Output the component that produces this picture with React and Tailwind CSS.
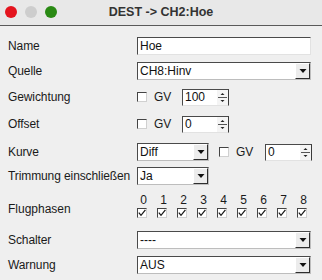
import React from "react";

const font = { fontFamily: '"Liberation Sans", Arial, sans-serif' };

const Check = ({ checked }) => (
  <div className="w-[10px] h-[10px] bg-white border-t border-l border-[#444] border-r-[#d0d0d0] border-b-[#d0d0d0] border-r border-b flex items-center justify-center shrink-0">
    {checked && (
      <svg width="8" height="8" viewBox="0 0 8 8">
        <path d="M0.8 3.6 L3 6.3 L7.4 0.8" fill="none" stroke="#1a1a1a" strokeWidth="1.3" />
      </svg>
    )}
  </div>
);

const Entry = ({ value, className }) => (
  <div
    className={`h-[18px] bg-white border-t border-l border-[#4a4a4a] border-r border-b border-r-[#e2e2e2] border-b-[#e2e2e2] flex items-center pl-[2px] text-[12px] text-[#111] ${className}`}
  >
    {value}
  </div>
);

const Combo = ({ value, className }) => (
  <div
    className={`h-[18px] bg-white border-t border-l border-[#4a4a4a] border-r border-b border-r-[#bdbdbd] border-b-[#bdbdbd] flex items-center text-[12px] text-[#111] ${className}`}
  >
    <span className="flex-1 pl-[2px] leading-none">{value}</span>
    <div className="w-[15px] h-[16px] bg-[#ececec] border-t border-l border-white border-r border-b border-r-[#2e2e2e] border-b-[#2e2e2e] flex items-center justify-center">
      <svg width="8" height="6" viewBox="0 0 8 6">
        <polygon points="0.5,1 7.5,1 4,5" fill="#111" />
      </svg>
    </div>
  </div>
);

const Spin = ({ value, className }) => (
  <div
    className={`h-[17px] bg-white border-t border-l border-[#4a4a4a] border-r border-b border-r-[#3a3a3a] border-b-[#e2e2e2] flex items-center text-[12px] text-[#111] ${className}`}
  >
    <span className="flex-1 pl-[2px] leading-none">{value}</span>
    <div className="w-[11px] h-[15px] bg-[#f4f4f4] flex flex-col items-center justify-center">
      <svg width="11" height="15" viewBox="0 0 11 15">
        <polygon points="3.5,5 7.5,5 5.5,3" fill="#222" />
        <line x1="1" y1="7.5" x2="10" y2="7.5" stroke="#555" strokeWidth="1" />
        <polygon points="3.5,10 7.5,10 5.5,12" fill="#222" />
      </svg>
    </div>
  </div>
);

const Row = ({ label, children, className = "" }) => (
  <div className={`flex items-center h-[18px] ${className}`}>
    <div className="w-[137px] pl-2 text-[12px] tracking-[-0.1px] text-[#1a1a1a] leading-none">{label}</div>
    {children}
  </div>
);

const App = () => {
  const phases = [0, 1, 2, 3, 4, 5, 6, 7, 8];
  return (
    <div className="w-[322px] h-[280px] bg-[#efefef] overflow-hidden" style={font}>
      {/* title bar */}
      <div className="relative h-[26px] bg-[#e8e8e8] border-b border-[#5a5a5a] flex items-center justify-center">
        <div className="absolute left-[5px] top-[6px] flex gap-[8px]">
          <div className="w-[12px] h-[12px] rounded-full bg-[#e4141e]" />
          <div className="w-[12px] h-[12px] rounded-full bg-[#cdcdcd]" />
          <div className="w-[12px] h-[12px] rounded-full bg-[#2a8a14]" />
        </div>
        <span className="text-[12.5px] font-bold text-[#333]">DEST -&gt; CH2:Hoe</span>
      </div>

      <div className="pt-[11px]">
        <Row label="Name">
          <Entry value="Hoe" className="w-[174px]" />
        </Row>
        <Row label="Quelle" className="mt-[7px]">
          <Combo value="CH8:Hinv" className="w-[174px]" />
        </Row>
        <Row label="Gewichtung" className="mt-[8px]">
          <Check />
          <span className="ml-[7px] w-[28px] text-[12px] text-[#1a1a1a]">GV</span>
          <Spin value="100" className="w-[47px]" />
        </Row>
        <Row label="Offset" className="mt-[9px]">
          <Check />
          <span className="ml-[7px] w-[28px] text-[12px] text-[#1a1a1a]">GV</span>
          <Spin value="0" className="w-[47px]" />
        </Row>
        <Row label="Kurve" className="mt-[10px]">
          <Combo value="Diff" className="w-[72px]" />
          <div className="ml-[10px]">
            <Check />
          </div>
          <span className="ml-[7px] w-[29px] text-[12px] text-[#1a1a1a]">GV</span>
          <Spin value="0" className="w-[47px]" />
        </Row>
        <Row label="Trimmung einschließen" className="mt-[6px]">
          <Combo value="Ja" className="w-[72px]" />
        </Row>

        <div className="flex h-[32px] mt-[5px]">
          <div className="w-[137px] pl-2 pt-[12px] text-[12px] text-[#1a1a1a] leading-[14px]">Flugphasen</div>
          <div className="flex">
            {phases.map((p) => (
              <div key={p} className="w-[20px] flex flex-col items-start">
                <span className="w-[13px] text-center text-[12px] text-[#1a1a1a] leading-[14px] mt-[3px]">{p}</span>
                <div className="mt-[1px]">
                  <Check checked />
                </div>
              </div>
            ))}
          </div>
        </div>

        <Row label="Schalter" className="mt-[9px]">
          <Combo value="----" className="w-[174px]" />
        </Row>
        <Row label="Warnung" className="mt-[7px]">
          <Combo value="AUS" className="w-[174px]" />
        </Row>
      </div>
    </div>
  );
};

export default App;
